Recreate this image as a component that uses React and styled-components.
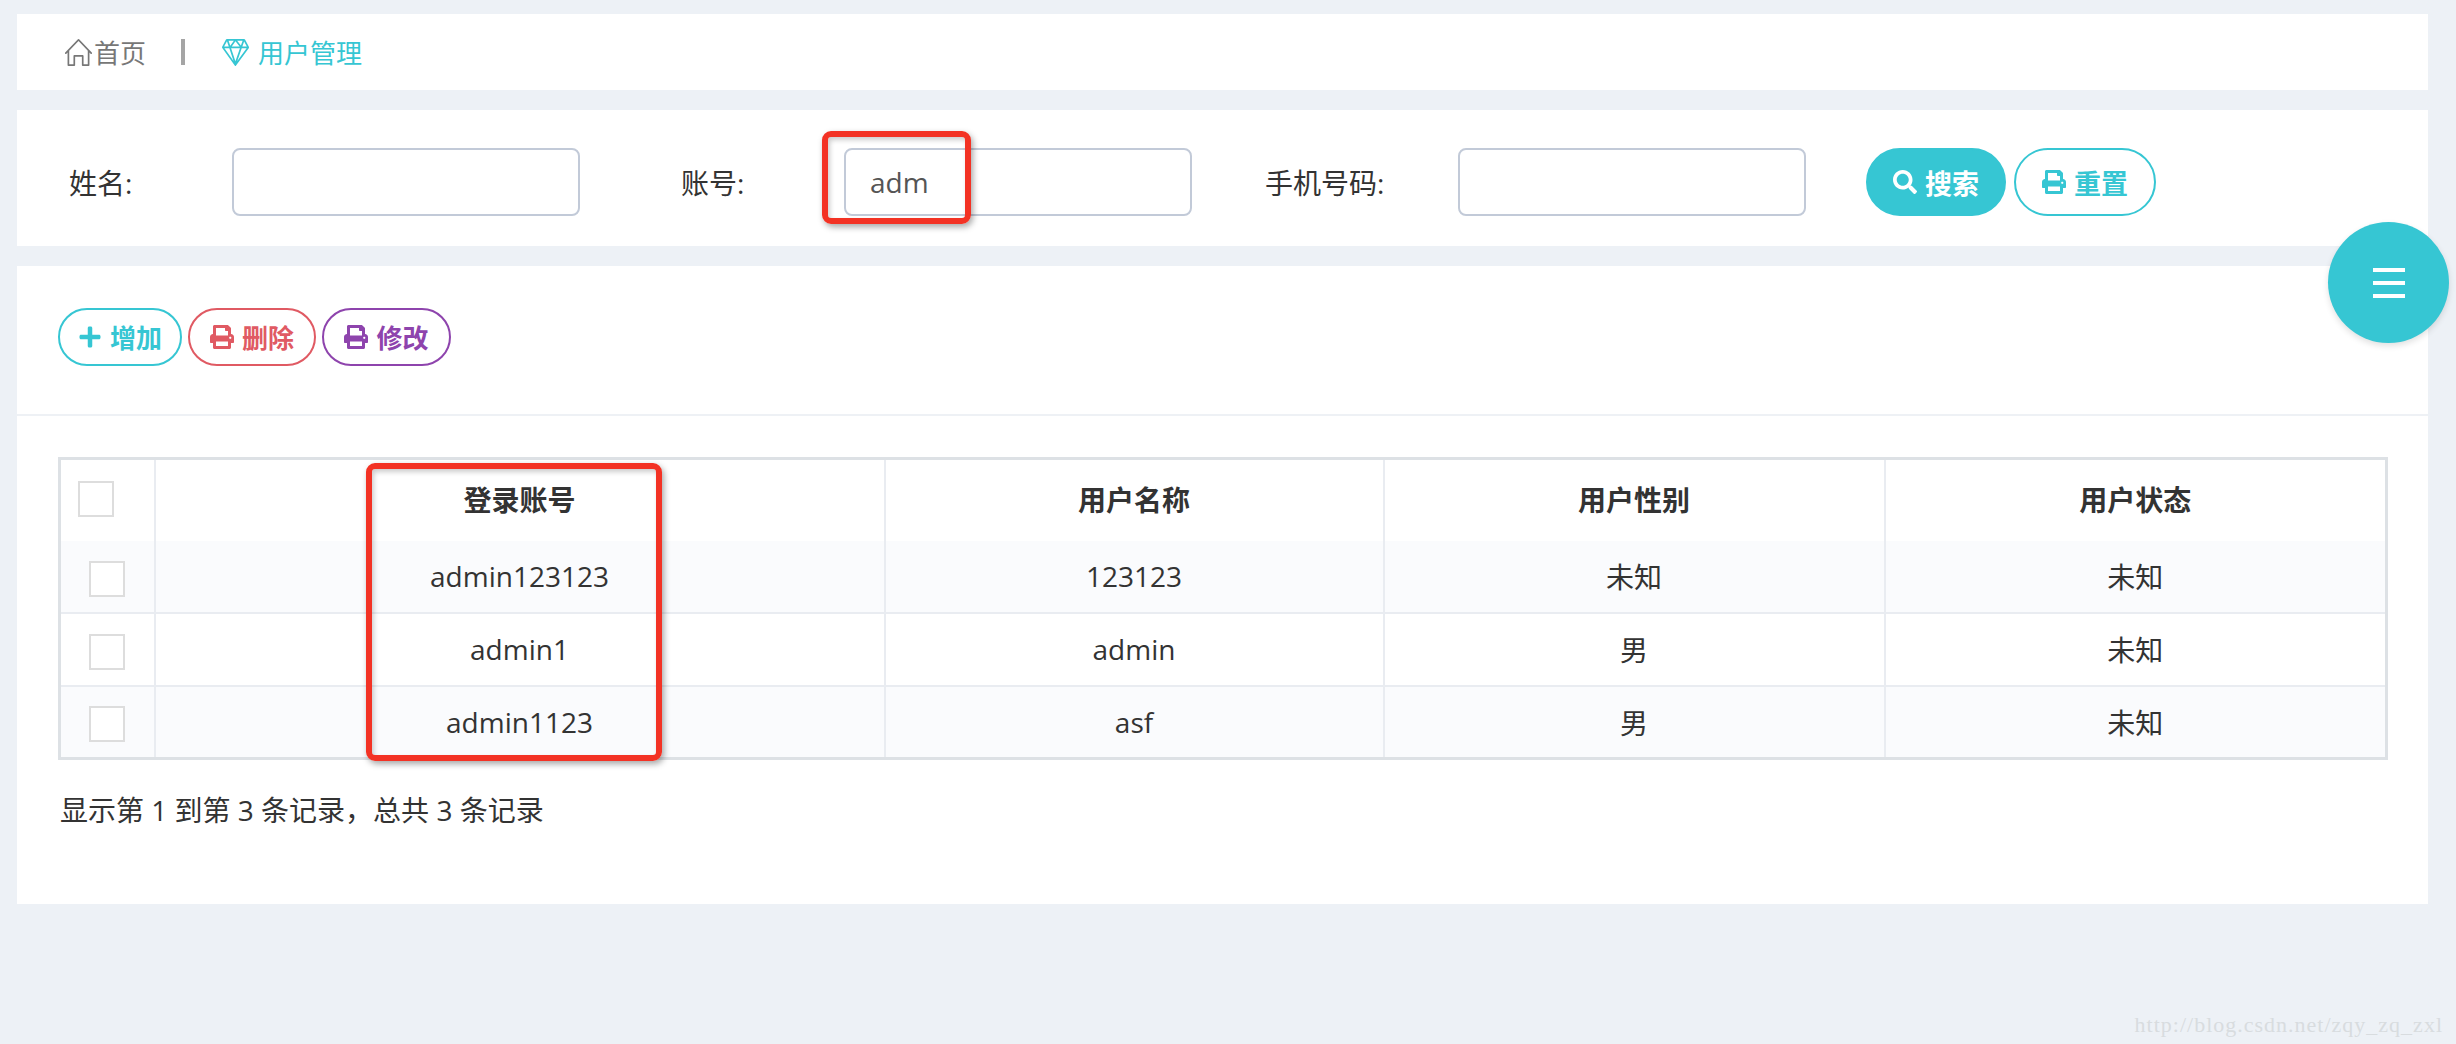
import React from 'react'
import styled, { createGlobalStyle } from 'styled-components'
import { FaPlus, FaPrint, FaSearch } from 'react-icons/fa'
import { SlHome, SlDiamond } from 'react-icons/sl'

const cyan = '#36c6d3'
const red = '#e05a63'
const purple = '#8e44ad'
const fonts = '"Open Sans", "Noto Sans CJK SC", sans-serif'

const GlobalStyle = createGlobalStyle`
  html, body {
    margin: 0;
    padding: 0;
    background: #edf1f6;
    font-family: ${fonts};
    color: #333;
  }
`

const Page = styled.div`
  position: relative;
  width: 2456px;
  height: 1044px;
  box-sizing: border-box;
  padding: 14px 28px 0 17px;
  overflow: hidden;
`

const Panel = styled.section`
  background: #fff;
  margin-bottom: 20px;
`

const Breadcrumb = styled(Panel)`
  height: 76px;
  display: flex;
  align-items: center;
  padding-left: 48px;
  font-size: 26px;
  color: #777;
`

const Crumb = styled.span`
  display: flex;
  align-items: center;
  gap: ${p => p.$gap}px;
  color: ${p => p.$color || '#777'};

  svg {
    font-size: 27px;
  }
`

const Separator = styled.span`
  width: 4px;
  height: 26px;
  background: #a5a5a5;
  margin: 0 37px 0 35px;
`

const SearchBar = styled(Panel)`
  height: 136px;
  box-sizing: border-box;
  padding: 38px 0 0 52px;
  display: flex;
  align-items: flex-start;
`

const Field = styled.div`
  display: flex;
  align-items: center;
  margin-right: ${p => p.$after}px;
`

const Label = styled.label`
  width: ${p => p.$width}px;
  font-size: 28px;
  color: #333;
`

const Input = styled.input`
  width: 348px;
  height: 68px;
  box-sizing: border-box;
  border: 2px solid #c2cad8;
  border-radius: 8px;
  padding: 0 24px;
  background: #fff;
  color: #555;
  font-family: ${fonts};
  font-size: 28px;
  outline: none;
`

const ButtonRow = styled.div`
  display: flex;
  gap: ${p => p.$gap}px;
`

const PillButton = styled.button`
  display: flex;
  align-items: center;
  justify-content: center;
  gap: 8px;
  width: ${p => p.$width}px;
  height: ${p => p.$height}px;
  padding: 0;
  box-sizing: border-box;
  border: 2px solid ${p => p.$color};
  border-radius: 40px;
  background: ${p => (p.$solid ? p.$color : '#fff')};
  color: ${p => (p.$solid ? '#fff' : p.$color)};
  font-family: ${fonts};
  font-size: ${p => p.$size}px;
  font-weight: 700;

  svg {
    font-size: 24px;
  }
`

const ListPanel = styled(Panel)`
  height: 638px;
  margin-bottom: 0;
`

const Toolbar = styled.div`
  height: 150px;
  box-sizing: border-box;
  padding: 42px 0 0 41px;
  border-bottom: 2px solid #eef1f5;
`

const TableWrap = styled.div`
  margin: 41px 43px 0 41px;
`

const Table = styled.table`
  width: 100%;
  height: 303px;
  table-layout: fixed;
  border-collapse: collapse;
  border: 3px solid #dde1e5;
  font-size: 28px;
`

const HeadCell = styled.th`
  height: 82px;
  box-sizing: border-box;
  padding: 0 0 2px;
  border-left: 2px solid #e9ecf1;
  font-weight: 700;
  color: #333;
  text-align: center;

  &:first-child {
    border-left: 0;
    text-align: left;
    padding: 0 0 8px 17px;
  }
`

const Row = styled.tr`
  background: ${p => (p.$odd ? '#fafbfd' : '#fff')};
  border-top: ${p => (p.$first ? '0' : '2px solid #e9ecf1')};
`

const Cell = styled.td`
  height: 72px;
  box-sizing: border-box;
  padding: 0;
  border-left: 2px solid #e9ecf1;
  text-align: center;
  color: #333;

  &:first-child {
    border-left: 0;
  }
`

const Check = styled.span`
  display: inline-block;
  width: 36px;
  height: 36px;
  box-sizing: border-box;
  border: 2px solid #ddd;
  background: #fff;
  vertical-align: middle;
`

const Summary = styled.p`
  margin: 32px 0 0;
  padding-left: 2px;
  font-size: 28px;
  line-height: 36px;
  color: #333;
`

const Annotation = styled.div`
  position: absolute;
  left: ${p => p.$x}px;
  top: ${p => p.$y}px;
  width: ${p => p.$w}px;
  height: ${p => p.$h}px;
  box-sizing: border-box;
  border: 6px solid #f33224;
  border-radius: 9px;
  box-shadow: 2px 3px 6px rgba(0, 0, 0, 0.35), inset 2px 3px 5px rgba(0, 0, 0, 0.2);
`

const Fab = styled.button`
  position: absolute;
  left: 2328px;
  top: 222px;
  width: 121px;
  height: 121px;
  padding: 0;
  border: 0;
  border-radius: 50%;
  background: ${cyan};
  box-shadow: 0 3px 6px rgba(0, 0, 0, 0.12);
  display: flex;
  flex-direction: column;
  align-items: center;
  justify-content: center;
  gap: 9px;
`

const FabBar = styled.span`
  width: 32px;
  height: 4px;
  background: #fff;
`

const Watermark = styled.div`
  position: absolute;
  right: 13px;
  top: 1012px;
  font-family: "Liberation Serif", serif;
  font-size: 22px;
  letter-spacing: 1px;
  color: #d8dcdf;
`

const columns = [95, 730, 499, 501, 502]

const users = [
  { account: 'admin123123', name: '123123', gender: '未知', status: '未知' },
  { account: 'admin1', name: 'admin', gender: '男', status: '未知' },
  { account: 'admin1123', name: 'asf', gender: '男', status: '未知' },
]

const App = () => (
  <Page>
    <GlobalStyle />

    <Breadcrumb as="nav">
      <Crumb $gap={2}><SlHome />首页</Crumb>
      <Separator />
      <Crumb $gap={9} $color={cyan}><SlDiamond />用户管理</Crumb>
    </Breadcrumb>

    <SearchBar>
      <Field $after={101}>
        <Label $width={163}>姓名:</Label>
        <Input />
      </Field>
      <Field $after={73}>
        <Label $width={163}>账号:</Label>
        <Input defaultValue="adm" />
      </Field>
      <Field $after={60}>
        <Label $width={193}>手机号码:</Label>
        <Input />
      </Field>
      <ButtonRow $gap={8}>
        <PillButton $solid $color={cyan} $width={140} $height={68} $size={27}><FaSearch />搜索</PillButton>
        <PillButton $color={cyan} $width={142} $height={68} $size={27}><FaPrint />重置</PillButton>
      </ButtonRow>
    </SearchBar>

    <ListPanel>
      <Toolbar>
        <ButtonRow $gap={6}>
          <PillButton $color={cyan} $width={124} $height={58} $size={26}><FaPlus />增加</PillButton>
          <PillButton $color={red} $width={128} $height={58} $size={26}><FaPrint />删除</PillButton>
          <PillButton $color={purple} $width={129} $height={58} $size={26}><FaPrint />修改</PillButton>
        </ButtonRow>
      </Toolbar>

      <TableWrap>
        <Table>
          <colgroup>
            {columns.map((w, i) => <col key={i} width={w} />)}
          </colgroup>
          <thead>
            <tr>
              <HeadCell><Check /></HeadCell>
              <HeadCell>登录账号</HeadCell>
              <HeadCell>用户名称</HeadCell>
              <HeadCell>用户性别</HeadCell>
              <HeadCell>用户状态</HeadCell>
            </tr>
          </thead>
          <tbody>
            {users.map((u, i) => (
              <Row key={u.account} $odd={i % 2 === 0} $first={i === 0}>
                <Cell><Check /></Cell>
                <Cell>{u.account}</Cell>
                <Cell>{u.name}</Cell>
                <Cell>{u.gender}</Cell>
                <Cell>{u.status}</Cell>
              </Row>
            ))}
          </tbody>
        </Table>
        <Summary>显示第 1 到第 3 条记录，总共 3 条记录</Summary>
      </TableWrap>
    </ListPanel>

    <Annotation $x={822} $y={131} $w={149} $h={93} />
    <Annotation $x={366} $y={463} $w={296} $h={298} />

    <Fab>
      <FabBar />
      <FabBar />
      <FabBar />
    </Fab>

    <Watermark>http://blog.csdn.net/zqy_zq_zxl</Watermark>
  </Page>
)

export default App
